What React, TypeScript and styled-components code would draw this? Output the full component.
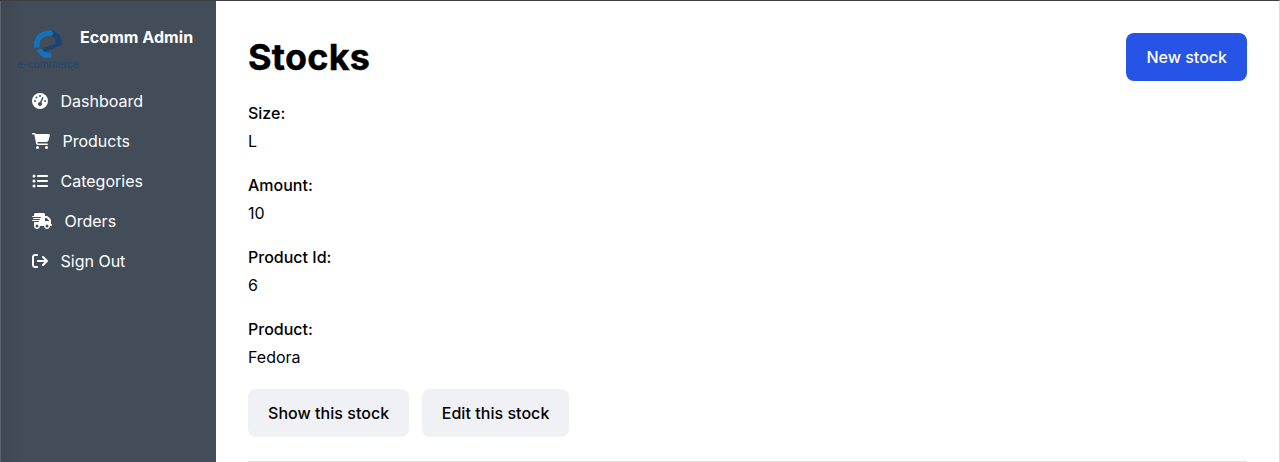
import React from "react";
import styled, { createGlobalStyle } from "styled-components";
import { FaGaugeHigh, FaCartShopping, FaListUl, FaTruckFast, FaArrowRightFromBracket } from "react-icons/fa6";

const GlobalStyle = createGlobalStyle`
  * { box-sizing: border-box; }
  body { margin: 0; font: 400 16px/24px Inter, "Liberation Sans", sans-serif; color: #000; background: #fff; }
`;
const Page = styled.div`
  display: flex;
  height: 462px;
  overflow: hidden;
  border-top: 1px solid #3f3e40;
  border-right: 1px solid #dedede;
`;
const Sidebar = styled.aside`
  width: 216px;
  flex: none;
  color: #fff;
  border-left: 1px solid #5a626d;
  background: linear-gradient(90deg, #3f4752 0, #434d59 26px);
`;
const Brand = styled.div`
  display: flex;
  padding: 16px 16px 0 15px;
  height: 80px;
`;
const BrandName = styled.span`
  font-weight: 700;
  letter-spacing: 0.06px;
  padding-top: 8px;
`;
const Nav = styled.nav`
  display: flex;
  flex-direction: column;
`;
const NavItem = styled.a`
  display: flex;
  align-items: center;
  gap: 12.5px;
  height: 40px;
  padding-left: 31px;
`;
const NavIcon = styled.span<{ $width: number }>`
  display: flex;
  svg { width: ${(p) => p.$width}px; height: 16px; }
`;
const Main = styled.main`
  flex: 1;
  padding: 32px 32px 0;
`;
const Header = styled.header`
  display: flex;
  justify-content: space-between;
  align-items: center;
  height: 48px;
`;
const Title = styled.h1`
  margin: 0;
  font-size: 36px;
  line-height: 40px;
  font-weight: 700;
  letter-spacing: 0.25px;
  -webkit-text-stroke: 0.4px #000;
`;
const Button = styled.a<{ $primary?: boolean }>`
  padding: 12px 20px;
  border-radius: 8px;
  font-weight: 500;
  letter-spacing: ${(p) => (p.$primary ? "0" : "0.04px")};
  color: ${(p) => (p.$primary ? "#fff" : "#000")};
  background: ${(p) => (p.$primary ? "#2554e7" : "#f0f1f5")};
`;
const Field = styled.div`
  margin: 20px 0;
`;
const Label = styled.strong`
  display: block;
  font-weight: 500;
  margin-bottom: 4px;
`;
const Actions = styled.div`
  display: flex;
  gap: 12.5px;
`;
const Rule = styled.hr`
  margin: 24px 0 0;
  border: 0;
  border-top: 1px solid #e0e0e0;
`;
const LogoMark = styled.svg`
  flex: none;
  overflow: visible;
`;
const Wordmark = styled.text`
  font: 400 10.5px Inter, sans-serif;
  fill: #1e4570;
`;

const Logo = () => (
  <LogoMark width="64" height="64" viewBox="0 0 64 64">
    <path d="M34 13.4C41.5 13.4 46.2 19.5 46 28L26.5 36Q22.6 35.4 24.6 32.6Q25 32 26.3 31.5L39.6 26.5C39.6 21.5 37.6 19 33.5 18.6Z" fill="#1d4475" />
    <path d="M34.2 16.2C25.5 15.6 19.6 22 20.9 30.6" fill="none" stroke="#1273bd" strokeWidth="5.4" />
    <circle cx="34.2" cy="16.2" r="2.7" fill="#1273bd" />
    <path d="M23.4 32.2Q25.2 38.2 32.9 38.4" fill="none" stroke="#1273bd" strokeWidth="5.2" />
    <circle cx="32.9" cy="38.4" r="2.6" fill="#1273bd" />
    <Wordmark x="1" y="51" textLength="62" lengthAdjust="spacingAndGlyphs">e-commerce</Wordmark>
  </LogoMark>
);

const nav = [
  { label: "Dashboard", Icon: FaGaugeHigh, width: 16 },
  { label: "Products", Icon: FaCartShopping, width: 18 },
  { label: "Categories", Icon: FaListUl, width: 16 },
  { label: "Orders", Icon: FaTruckFast, width: 20 },
  { label: "Sign Out", Icon: FaArrowRightFromBracket, width: 16 },
];
const fields = [["Size:", "L"], ["Amount:", "10"], ["Product Id:", "6"], ["Product:", "Fedora"]];

export default function App() {
  return (
    <Page>
      <GlobalStyle />
      <Sidebar>
        <Brand><Logo /><BrandName>Ecomm Admin</BrandName></Brand>
        <Nav>
          {nav.map(({ label, Icon, width }) => (
            <NavItem key={label}><NavIcon $width={width}><Icon /></NavIcon>{label}</NavItem>
          ))}
        </Nav>
      </Sidebar>
      <Main>
        <Header><Title>Stocks</Title><Button $primary>New stock</Button></Header>
        {fields.map(([label, value]) => (
          <Field key={label}><Label>{label}</Label>{value}</Field>
        ))}
        <Actions><Button>Show this stock</Button><Button>Edit this stock</Button></Actions>
        <Rule />
      </Main>
    </Page>
  );
}
